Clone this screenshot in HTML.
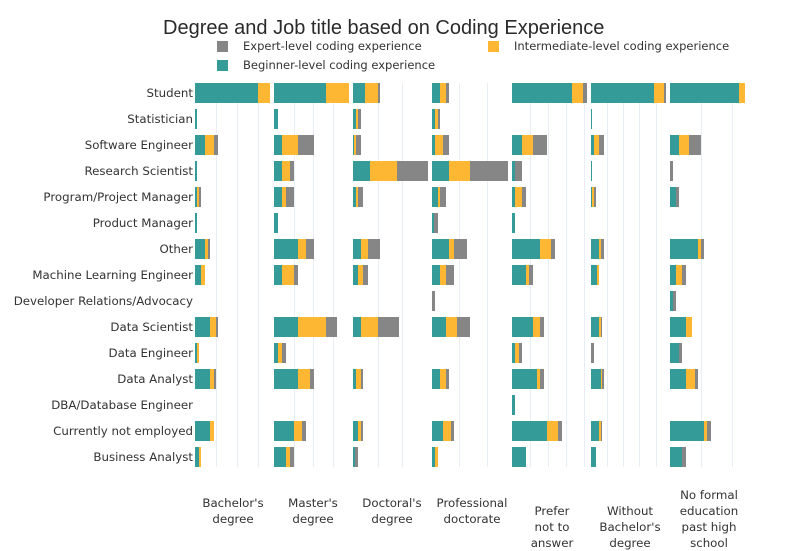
<!DOCTYPE html>
<html><head><meta charset="utf-8"><style>
body{margin:0;width:789px;height:550px;background:#fff;position:relative;overflow:hidden;font-family:"DejaVu Sans","Liberation Sans",sans-serif;color:#444}
.t{position:absolute;left:163px;top:17px;font:20px "Liberation Sans",sans-serif;color:#2a2a2a;white-space:nowrap}
.lg{position:absolute;font-size:11.5px;white-space:nowrap;color:#333}
.sq{position:absolute;width:11px;height:11px}
.yl{position:absolute;right:596px;font-size:11.8px;white-space:nowrap;color:#333;line-height:14px}
.xl{position:absolute;font-size:11.8px;text-align:center;line-height:16px;color:#333;width:80px}
.g{position:absolute;top:83px;height:384px;width:1px;background:#e9edf4}
.b{position:absolute;height:20px}
</style></head><body>
<div class="t">Degree and Job title based on Coding Experience</div>
<div class="sq" style="left:217px;top:41px;background:#868686"></div><div class="lg" style="left:243px;top:39px">Expert-level coding experience</div>
<div class="sq" style="left:488px;top:41px;background:#fdb733"></div><div class="lg" style="left:514px;top:39px">Intermediate-level coding experience</div>
<div class="sq" style="left:217px;top:60px;background:#359b98"></div><div class="lg" style="left:243px;top:58px">Beginner-level coding experience</div>
<div id="c"></div>
<div class="yl" style="top:86px">Student</div>
<div class="yl" style="top:112px">Statistician</div>
<div class="yl" style="top:138px">Software Engineer</div>
<div class="yl" style="top:164px">Research Scientist</div>
<div class="yl" style="top:190px">Program/Project Manager</div>
<div class="yl" style="top:216px">Product Manager</div>
<div class="yl" style="top:242px">Other</div>
<div class="yl" style="top:268px">Machine Learning Engineer</div>
<div class="yl" style="top:294px">Developer Relations/Advocacy</div>
<div class="yl" style="top:320px">Data Scientist</div>
<div class="yl" style="top:346px">Data Engineer</div>
<div class="yl" style="top:372px">Data Analyst</div>
<div class="yl" style="top:398px">DBA/Database Engineer</div>
<div class="yl" style="top:424px">Currently not employed</div>
<div class="yl" style="top:450px">Business Analyst</div>
<div class="xl" style="left:193px;top:495px">Bachelor's<br>degree</div>
<div class="xl" style="left:273px;top:495px">Master's<br>degree</div>
<div class="xl" style="left:352px;top:495px">Doctoral's<br>degree</div>
<div class="xl" style="left:432px;top:495px">Professional<br>doctorate</div>
<div class="xl" style="left:512px;top:503px">Prefer<br>not to<br>answer</div>
<div class="xl" style="left:590px;top:503px">Without<br>Bachelor's<br>degree</div>
<div class="xl" style="left:669px;top:487px">No formal<br>education<br>past high<br>school</div>
<script>
var grid=[216,237,258,294,313,333,378,402,459,487,530,548,566,584,607,623,639,656,701,732];
var st=[195,274,353,432,512,591,670];
var D=[
[[63,12,0],[2,0,0],[10,9,4],[2,0,0],[2,2,2],[2,0,0],[10,3,2],[6,4,0],[0,0,0],[15,6,2],[2,2,0],[15,4,2],[0,0,0],[15,4,0],[4,2,0]],
[[52,23,0],[4,0,0],[8,16,16],[8,8,4],[8,4,8],[4,0,0],[24,8,8],[8,12,4],[0,0,0],[24,28,11],[4,4,4],[24,12,4],[0,0,0],[20,8,4],[12,4,4]],
[[12,13,2],[3,2,3],[1,2,5],[17,27,31],[3,2,5],[0,0,0],[8,7,12],[5,5,5],[0,0,0],[8,17,21],[0,0,0],[3,5,2],[0,0,0],[5,3,2],[2,0,3]],
[[8,6,3],[3,3,2],[3,8,6],[17,21,38],[6,2,6],[2,0,4],[17,5,13],[8,6,8],[0,0,3],[14,11,13],[0,0,0],[8,6,3],[0,0,0],[11,8,3],[3,3,0]],
[[60,11,4],[0,0,0],[10,11,14],[3,0,7],[3,7,4],[3,0,0],[28,11,4],[14,3,4],[0,0,0],[21,7,4],[3,4,3],[25,3,4],[3,0,0],[35,11,4],[14,0,0]],
[[63,10,2],[1,0,0],[3,5,5],[1,0,0],[1,2,2],[0,0,0],[8,2,3],[6,2,0],[0,0,0],[8,2,1],[0,0,3],[10,1,2],[0,0,0],[8,2,1],[5,0,0]],
[[69,6,0],[0,0,0],[9,10,12],[0,0,3],[6,0,3],[0,0,0],[28,3,3],[6,6,4],[3,0,3],[16,6,0],[9,0,3],[16,9,3],[0,0,0],[34,3,4],[12,0,4]]];
var col=['#359b98','#fdb733','#868686'],h='';
grid.forEach(function(x){h+='<div class="g" style="left:'+x+'px"></div>'});
D.forEach(function(p,i){p.forEach(function(r,j){var x=st[i],y=83+26*j;r.forEach(function(w,k){if(w>0){h+='<div class="b" style="left:'+x+'px;top:'+y+'px;width:'+w+'px;background:'+col[k]+'"></div>';x+=w;}})})});
document.getElementById('c').innerHTML=h;
</script>
</body></html>
